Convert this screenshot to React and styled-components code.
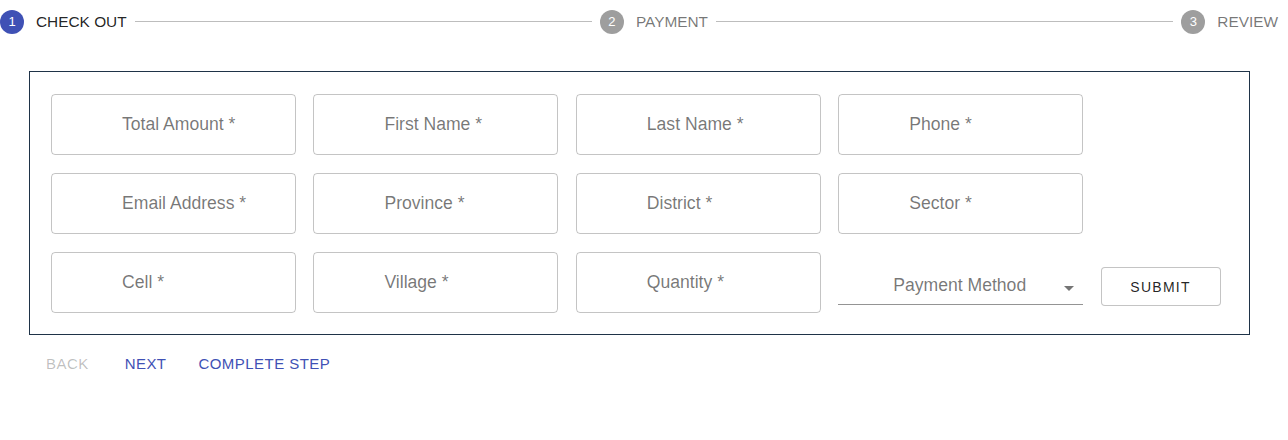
import React from "react";
import styled, { createGlobalStyle } from "styled-components";

const GlobalStyle = createGlobalStyle`
  body {
    margin: 0;
    background: #fff;
    font-family: "Liberation Sans", Arial, sans-serif;
  }
`;

const steps = ["Check Out", "Payment", "Review"];

const rows = [
  ["Total Amount", "First Name", "Last Name", "Phone"],
  ["Email Address", "Province", "District", "Sector"],
  ["Cell", "Village", "Quantity"],
];

function App() {
  const active = 0;
  return (
    <Page>
      <GlobalStyle />
      <Stepper>
        {steps.map((label, i) => (
          <React.Fragment key={label}>
            {i > 0 && <Connector />}
            <Step>
              <StepIcon active={i === active}>{i + 1}</StepIcon>
              <StepLabel active={i === active}>{label}</StepLabel>
            </Step>
          </React.Fragment>
        ))}
      </Stepper>

      <FormBox>
        {rows.map((row, r) => (
          <Row key={r}>
            {row.map((f) => (
              <Field key={f}>
                <FieldLabel>{f} *</FieldLabel>
              </Field>
            ))}
            {r === rows.length - 1 && (
              <>
                <SelectCell>
                  <Select>
                    <SelectText>Payment Method</SelectText>
                    <Arrow viewBox="0 0 24 24">
                      <path d="M7 10l5 5 5-5z" />
                    </Arrow>
                  </Select>
                </SelectCell>
                <SubmitButton>Submit</SubmitButton>
              </>
            )}
          </Row>
        ))}
      </FormBox>

      <Actions>
        <TextButton disabled>Back</TextButton>
        <TextButton primary gap={0}>
          Next
        </TextButton>
        <TextButton primary>Complete Step</TextButton>
      </Actions>
    </Page>
  );
}

const Page = styled.div`
  width: 1288px;
`;

const Stepper = styled.div`
  display: flex;
  align-items: center;
  height: 43px;
  padding-right: 10px;
`;

const Step = styled.div`
  display: flex;
  align-items: center;
  gap: 12px;
`;

const StepIcon = styled.div`
  width: 24px;
  height: 24px;
  border-radius: 50%;
  background: ${(p) => (p.active ? "#3f51b5" : "#9e9e9e")};
  color: #fff;
  font-size: 13px;
  display: flex;
  align-items: center;
  justify-content: center;
`;

const StepLabel = styled.span`
  font-size: 15.4px;
  text-transform: uppercase;
  color: ${(p) => (p.active ? "rgba(0,0,0,0.87)" : "rgba(0,0,0,0.54)")};
`;

const Connector = styled.div`
  flex: 1;
  height: 1px;
  background: #bdbdbd;
  margin: 0 8px;
`;

const FormBox = styled.div`
  margin: 28px 38px 0 29px;
  border: 1px solid #1f3348;
  padding: 22px 21px 21px 21px;
  display: flex;
  flex-direction: column;
  gap: 18px;
`;

const Row = styled.div`
  display: flex;
  align-items: center;
  gap: 17.4px;
`;

const Field = styled.div`
  width: 245px;
  height: 61px;
  border: 1px solid rgba(0, 0, 0, 0.23);
  border-radius: 4px;
  box-sizing: border-box;
  display: flex;
  align-items: center;
  padding-left: 70px;
`;

const FieldLabel = styled.span`
  font-size: 17.6px;
  color: rgba(0, 0, 0, 0.54);
`;

const SelectCell = styled.div`
  width: 245px;
  height: 61px;
  display: flex;
  align-items: flex-end;
  padding-bottom: 8px;
  box-sizing: border-box;
`;

const Select = styled.div`
  width: 100%;
  height: 38px;
  border-bottom: 1px solid rgba(0, 0, 0, 0.42);
  display: flex;
  align-items: center;
  padding-left: 55px;
  box-sizing: border-box;
`;

const SelectText = styled.span`
  font-size: 17.6px;
  color: rgba(0, 0, 0, 0.54);
  flex: 1;
`;

const Arrow = styled.svg`
  width: 24px;
  height: 24px;
  fill: rgba(0, 0, 0, 0.54);
  margin-right: 2px;
  margin-top: 4px;
`;

const SubmitButton = styled.button`
  width: 120px;
  height: 39px;
  margin-top: 8px;
  background: #fff;
  border: 1px solid rgba(0, 0, 0, 0.23);
  border-radius: 4px;
  font-family: "Liberation Sans", Arial, sans-serif;
  font-size: 14px;
  letter-spacing: 0.09em;
  text-transform: uppercase;
  color: rgba(0, 0, 0, 0.87);
`;

const Actions = styled.div`
  display: flex;
  margin: 14px 0 0 30px;
`;

const TextButton = styled.button`
  background: none;
  border: none;
  padding: 6px 16px;
  margin-right: ${(p) => (p.gap === 0 ? 0 : 4)}px;
  font-family: "Liberation Sans", Arial, sans-serif;
  font-size: 15px;
  letter-spacing: 0.03em;
  text-transform: uppercase;
  color: ${(p) =>
    p.disabled ? "rgba(0,0,0,0.26)" : p.primary ? "#3f51b5" : "inherit"};
`;

export default App;
